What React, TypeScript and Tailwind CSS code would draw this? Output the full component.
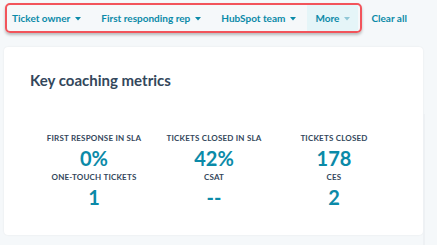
import React from "react";

const Caret = ({ light }: { light?: boolean }) => (
  <svg width="6" height="4" viewBox="0 0 6 4" className="ml-[5px] mt-[1px] shrink-0">
    <path d="M0 0 L6 0 L3 3.5 Z" fill={light ? "#8fc7d6" : "#0b8aa8"} />
  </svg>
);

const Filter = ({ label }: { label: string }) => (
  <div className="flex items-center whitespace-nowrap text-[10px] font-bold text-[#0b8aa8]">
    <span>{label}</span>
    <Caret />
  </div>
);

const Metric = ({ label, value }: { label: string; value: string }) => (
  <div className="flex flex-col items-center">
    <div className="text-[8px] font-bold tracking-[0.2px] text-[#33475b] leading-[12px] whitespace-nowrap">
      {label}
    </div>
    <div className="mt-[2px] text-[20px] font-bold text-[#0b8aa8] leading-[25px] whitespace-nowrap">{value}</div>
  </div>
);

export default function App() {
  return (
    <div
      className="w-[437px] h-[245px] bg-[#f5f8fa] overflow-hidden relative"
      style={{ fontFamily: "Lato, 'Open Sans', sans-serif" }}
    >
      <div className="flex items-center pt-[3px]">
        <div className="ml-[5px] h-[30px] flex items-stretch border-2 border-[#f2545b] rounded-[5px] shadow-[0_2px_3px_rgba(0,0,0,0.25)] pl-[5px] pr-[2px]">
          <div className="flex items-center gap-[20px]">
            <Filter label="Ticket owner" />
            <Filter label="First responding rep" />
            <Filter label="HubSpot team" />
          </div>
          <div className="ml-[11px] px-[8px] flex items-center whitespace-nowrap bg-[#e5f5f8] text-[10px] font-bold text-[#0b8aa8]">
            <span>More</span>
            <Caret light />
          </div>
        </div>
        <div className="ml-[9px] whitespace-nowrap text-[10px] font-bold text-[#0b8aa8]">Clear all</div>
      </div>
      <div className="flex">
        <div className="mt-[14px] ml-[4px] w-[419px] h-[188px] shrink-0 bg-white rounded-[4px] shadow-[0_0_2px_rgba(0,0,0,0.08)]">
          <div className="pl-[26px] pt-[24px] text-[15px] font-bold text-[#33475b] leading-[18px]">
            Key coaching metrics
          </div>
          <div className="pl-[30px] pt-[43px] grid grid-cols-[120px_120px_120px]">
            <Metric label="FIRST RESPONSE IN SLA" value="0%" />
            <Metric label="TICKETS CLOSED IN SLA" value="42%" />
            <Metric label="TICKETS CLOSED" value="178" />
            <Metric label="ONE-TOUCH TICKETS" value="1" />
            <Metric label="CSAT" value="--" />
            <Metric label="CES" value="2" />
          </div>
        </div>
        <div className="mt-[81px] w-[2px] h-[164px] bg-[#eef1f4]" />
      </div>
    </div>
  );
}
